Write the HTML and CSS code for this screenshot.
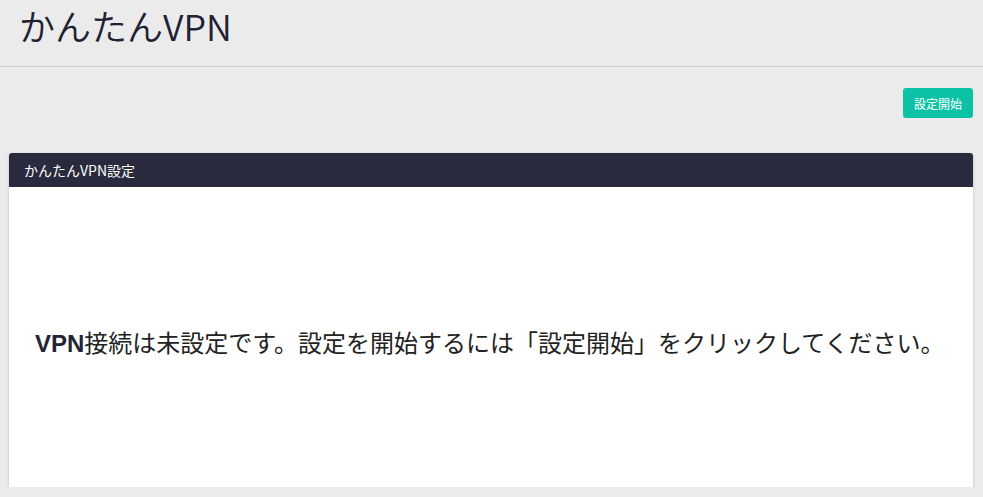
FILE: index.html
```html
<!DOCTYPE html>
<html lang="ja">

<head>
    <meta charset="UTF-8">
    <meta name="viewport" content="width=device-width, initial-scale=1.0">
    <title>かんたんVPN</title>
    <link rel="stylesheet" href="styles.css">
</head>

<body>
    <header class="page-header">
        <h1>かんたんVPN</h1>
    </header>
    <div class="toolbar">
        <button class="start-btn">設定開始</button>
    </div>
    <div class="panel">
        <div class="panel-head">かんたんVPN設定</div>
        <div class="panel-body">
            <p class="status"><b>VPN</b>接続は未設定です。設定を開始するには「設定開始」をクリックしてください。</p>
        </div>
    </div>
</body>

</html>
```

FILE: styles.css
```css
body {
    font-family: "Noto Sans CJK JP", "Noto Sans", sans-serif;
    margin: 0;
    padding: 0;
    background-color: #ebebeb;
    color: #222436;
    overflow: hidden;
}

.page-header {
    height: 67px;
    border-bottom: 1px solid #cccccc;
    padding-left: 19px;
    box-sizing: border-box;
    display: flex;
    align-items: center;
}

.page-header h1 {
    margin: 0;
    font-size: 36px;
    font-weight: 350;
    line-height: 1;
    margin-top: -16px;
    color: #1f2133;
}

.toolbar {
    display: flex;
    justify-content: flex-end;
    padding: 20px 10px 35px 0;
}

.start-btn {
    background-color: #0bc2a6;
    border: none;
    color: #ffffff;
    font-family: inherit;
    font-size: 12px;
    width: 70px;
    height: 30px;
    padding: 0;
    margin-top: 1px;
    border-radius: 3px;
    cursor: pointer;
}

.panel {
    margin: 0 10px 0 9px;
    background-color: #ffffff;
    border-radius: 3px 3px 0 0;
    box-shadow: 0 1px 3px rgba(0, 0, 0, 0.2);
}

.panel-head {
    background-color: #292a3d;
    color: #ffffff;
    font-size: 14px;
    height: 34px;
    line-height: 34px;
    padding-left: 15px;
    border-radius: 3px 3px 0 0;
}

.panel-body {
    height: 300px;
    display: flex;
    align-items: center;
    padding-left: 26px;
}

.status {
    margin: 0;
    margin-top: 8px;
    font-size: 24px;
    color: #222222;
}

.status b {
    font-family: "Liberation Sans", Arial, sans-serif;
    font-weight: 700;
    color: #222436;
}
```
